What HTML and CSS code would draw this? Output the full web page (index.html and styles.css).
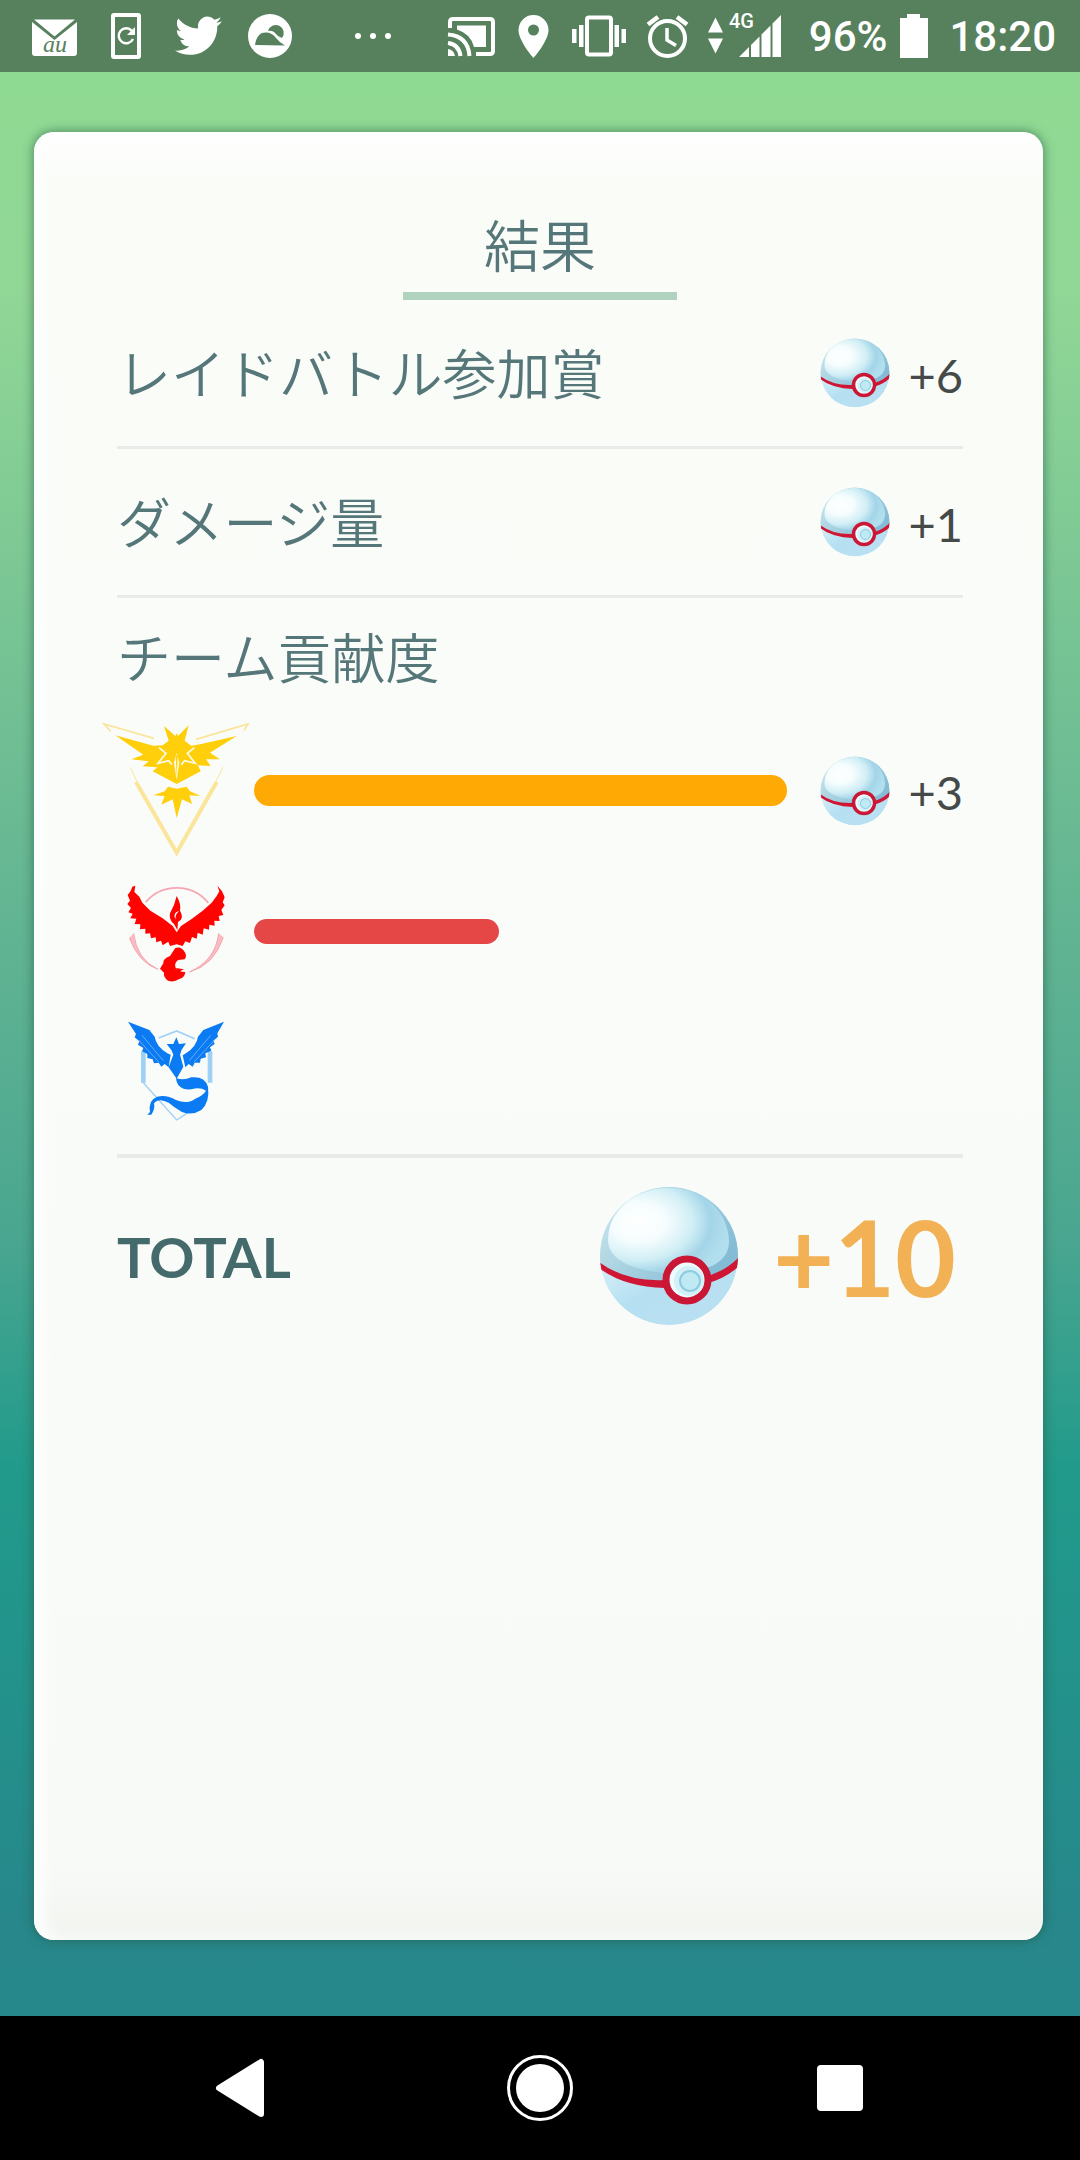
FILE: index.html
```html
<!DOCTYPE html>
<html lang="ja">
<head>
<meta charset="utf-8">
<meta name="viewport" content="width=device-width, initial-scale=1">
<title>結果</title>
<link rel="stylesheet" href="styles.css">
</head>
<body>
<svg class="defs" aria-hidden="true">
  <defs>
    <radialGradient id="shell" cx="0.25" cy="0.4" r="0.75">
      <stop offset="0" stop-color="#fefffe"/>
      <stop offset="0.3" stop-color="#f6fdfe"/>
      <stop offset="0.6" stop-color="#d0eef5"/>
      <stop offset="0.8" stop-color="#a3d5e8"/>
      <stop offset="1" stop-color="#b2dfee"/>
    </radialGradient>
    <linearGradient id="rim" x1="0" y1="0" x2="1" y2="0.6">
      <stop offset="0" stop-color="#d4edf4"/>
      <stop offset="0.35" stop-color="#b4d9e5"/>
      <stop offset="1" stop-color="#84bcd5"/>
    </linearGradient>
    <linearGradient id="base" x1="0" y1="0.2" x2="0.5" y2="1">
      <stop offset="0" stop-color="#f4fcfe"/>
      <stop offset="0.7" stop-color="#b5e0f1"/>
      <stop offset="1" stop-color="#b9e0f2"/>
    </linearGradient>
    <clipPath id="ball-clip"><circle cx="70" cy="70" r="69"/></clipPath>
    <symbol id="ball" viewBox="0 0 140 140">
      <g clip-path="url(#ball-clip)">
        <circle cx="70" cy="70" r="69" fill="url(#base)"/>
        <path d="M0 0H140V78Q116 96 68 96T0 78Z" fill="url(#rim)"/>
        <path d="M9 54C9 26 34 2 70 2C106 2 129 27 130 55C130 75 112 87 68 87C34 85 9 74 9 54Z" fill="url(#shell)"/>
        <path d="M0 76Q27 96 66 94Q116 97 140 71V80Q116 103 66 102Q25 101 0 82Z" fill="#cf1634"/>
      </g>
      <circle cx="88" cy="94" r="21" fill="#ecfbfe" stroke="#ca1735" stroke-width="7"/>
      <circle cx="90" cy="95" r="15" fill="#d4f0f7"/>
      <circle cx="91" cy="95" r="10" fill="#bfe9f3" stroke="#8dcbe0" stroke-width="2"/>
    </symbol>
  </defs>
</svg>

<header class="status">
  <div class="status-group">
    <svg class="status-icon" viewBox="24 0 70 72" width="70" height="72" fill="#fff" role="img" aria-label="メール">
      <path d="M34 19.500H75L54.500 36.500Z"/>
      <path d="M32 22L54.500 40L77 22V53a3 3 0 0 1-3 3H35a3 3 0 0 1-3-3Z"/>
      <text class="mail-mark" x="43" y="52">au</text>
    </svg>
    <svg class="status-icon" viewBox="94 0 64 72" width="64" height="72" role="img" aria-label="端末の更新">
      <rect x="113" y="15" width="26" height="42" rx="1" fill="none" stroke="#fff" stroke-width="4"/>
      <path d="M132 31A7.500 7.500 0 1 0 133 39" fill="none" stroke="#fff" stroke-width="2.500"/>
      <path d="M135 27V35H127Z" fill="#fff"/>
    </svg>
    <svg class="status-icon" viewBox="158 0 80 72" width="80" height="72" fill="#fff" role="img" aria-label="Twitter">
      <path transform="translate(175 12.200) scale(1.960)" d="M23.950 4.570a10 10 0 0 1-2.820.77 4.960 4.960 0 0 0 2.160-2.720c-.95.550-2 .95-3.130 1.180a4.920 4.920 0 0 0-8.380 4.480C7.690 8.090 4.070 6.130 1.640 3.160a4.820 4.820 0 0 0-.67 2.480c0 1.710.87 3.210 2.190 4.100a4.900 4.900 0 0 1-2.230-.62v.06a4.920 4.920 0 0 0 3.950 4.830 5 5 0 0 1-2.210.080 4.940 4.940 0 0 0 4.600 3.420A9.870 9.870 0 0 1 0 19.540a13.990 13.990 0 0 0 7.550 2.210c9.050 0 14-7.500 14-13.980 0-.21 0-.42-.02-.63a9.940 9.940 0 0 0 2.420-2.570z"/>
    </svg>
    <svg class="status-icon" viewBox="238 0 84 72" width="84" height="72" role="img" aria-label="天気">
      <circle cx="270" cy="36" r="22" fill="#fff"/>
      <g fill="#57815c">
        <path d="M268 31A8 8 0 1 1 282 38Q277 36 274 32Q271 30 268 31Z"/>
        <path d="M255 45Q257 32 266 32.500Q272 32.500 276 38Q279 42 285 45.500Z"/>
      </g>
    </svg>
    <svg class="status-icon" viewBox="322 0 84 72" width="84" height="72" fill="#fff" role="img" aria-label="その他の通知">
      <circle cx="358" cy="36" r="3"/><circle cx="373" cy="36" r="3"/><circle cx="388" cy="36" r="3"/>
    </svg>
  </div>

  <div class="status-group">
    <svg class="status-icon" viewBox="440 0 68 72" width="68" height="72" role="img" aria-label="キャスト">
      <path d="M451 28V22Q451 19 454 19H491Q494 19 494 22V51Q494 54 491 54H477" fill="none" stroke="#fff" stroke-width="4"/>
      <path d="M458 25.500H487V47H475Q472 34 458 29.500Z" fill="#fff"/>
      <path d="M449 34.500Q469 36 470.500 56M449 43Q460 44.500 461.500 56" fill="none" stroke="#fff" stroke-width="4"/>
      <path d="M449 49Q455 50 456 56H449Z" fill="#fff"/>
    </svg>
    <svg class="status-icon" viewBox="508 0 56 72" width="56" height="72" role="img" aria-label="位置情報">
      <path fill="#fff" fill-rule="evenodd" d="M534.500 15a15 15 0 0 1 15 15C549.500 41 534.500 58 534.500 58S519.500 41 519.500 30a15 15 0 0 1 15-15Zm0 9.500a5.500 5.500 0 1 0 0 11a5.500 5.500 0 0 0 0-11Z"/>
    </svg>
    <svg class="status-icon" viewBox="564 0 72 72" width="72" height="72" fill="#fff" role="img" aria-label="マナーモード">
      <rect x="588" y="17.500" width="24" height="37" rx="2" fill="none" stroke="#fff" stroke-width="4"/>
      <path d="M573 29h4.500v14H573zM580 25h4.500v22H580zM615.500 25h4.500v22h-4.500zM622.500 29h4.500v14h-4.500z"/>
    </svg>
    <svg class="status-icon" viewBox="636 0 66 72" width="66" height="72" fill="none" stroke="#fff" stroke-width="4" role="img" aria-label="アラーム">
      <circle cx="668.500" cy="38.500" r="17.500"/>
      <path d="M649 24.500L659 17M688 24.500L678 17" stroke-width="4.500"/>
      <path d="M668 28V40L677 45.500" stroke-width="3.500"/>
    </svg>
    <svg class="status-icon" viewBox="702 0 98 72" width="98" height="72" fill="#fff" role="img" aria-label="4G">
      <path d="M709 32.500L716.500 17.500L724 32.500ZM709 38.500H724L716.500 53.500Z"/>
      <path d="M740 57L750 47V57ZM752 45L760.500 36.500V57H752ZM762.500 34.500L771.500 25.500V57H762.500ZM773.500 23.500L782 15V57H773.500Z"/>
      <text class="network" x="730" y="28">4G</text>
    </svg>
    <span class="battery-level">96%</span>
    <svg class="status-icon" viewBox="890 0 50 72" width="50" height="72" fill="#fff" role="img" aria-label="電池">
      <path d="M906 14H919V18H927V58H899V18H906Z"/>
    </svg>
    <time class="clock">18:20</time>
  </div>
</header>

<main class="screen">
  <section class="card">
    <h1 class="title">結果</h1>

    <div class="row">
      <h2 class="label">レイドバトル参加賞</h2>
      <svg class="ball" aria-hidden="true"><use href="#ball"/></svg>
      <span class="amount">+6</span>
    </div>

    <div class="row">
      <h2 class="label">ダメージ量</h2>
      <svg class="ball" aria-hidden="true"><use href="#ball"/></svg>
      <span class="amount">+1</span>
    </div>

    <div class="contribution">
      <h2 class="label contribution-label">チーム貢献度</h2>
      <ul class="teams">
        <li class="team">
          <svg class="emblem" viewBox="36 60 450 423" role="img" aria-label="インスティンクト">
            <g fill="none" stroke="#fae59a">
              <path d="M192 115L42 72L62 94M318 118L474 72L462 92" stroke-width="5"/>
              <path d="M121 202L142 248M399 202L376 248" stroke-width="3"/>
              <path d="M138 246L260 458L380 246" stroke-width="12"/>
            </g>
            <g fill="#fecf0a">
              <path d="M76 106L190 137L218 136L236 122L222 78L256 108L260 100L264 108L296 76L284 122L304 137L334 132L440 108L360 158L390 178L348 178L362 198L324 196L332 214L260 252L188 214L202 202L158 199L176 184L124 178L160 164Z"/>
              <path d="M234 260L260 266L290 260L300 274L332 288L298 286L306 312L276 298L260 354L248 298L214 314L224 288L190 286L224 274Z"/>
            </g>
            <path d="M207 143L228 160L204 190L236 182L246 194M313 143L292 160L316 190L284 182L274 194" fill="none" stroke="#fffbe8" stroke-width="5"/>
            <path d="M260 158L268 188L260 240L252 188Z" fill="#fffbe8"/>
            <path d="M257 166h6l-3 66z" fill="#fecf0a"/>
          </svg>
          <div class="track"><div class="bar bar-yellow"></div></div>
          <div class="reward">
            <svg class="ball" aria-hidden="true"><use href="#ball"/></svg>
            <span class="amount">+3</span>
          </div>
        </li>
        <li class="team">
          <svg class="emblem" viewBox="36 483 450 423" role="img" aria-label="ヴァーラー">
            <g fill="none" stroke="#f6a6b0">
              <path d="M167 607A122 122 0 0 1 355 609" stroke-width="5"/>
              <path d="M131 700Q140 778 204 808Q146 788 118 714M386 700Q376 782 298 816Q372 796 400 712" stroke-width="3" fill="#f9bcc4"/>
            </g>
            <g fill="#fe0300">
              <path d="M136 557L133 576L148 590L157 608L181 632L218 655L248 678L260 697L273 678L306 656L338 632L365 608L380 588L388 574L382 557L396 574L404 592L398 607L404 616L394 630L400 645L386 648L389 663L373 662L374 677L358 674L357 689L341 685L338 704L323 698L320 716L306 711L300 729L286 724L278 738L260 733L240 738L235 725L218 736L213 722L199 727L197 712L183 715L180 700L166 701L166 686L150 688L151 673L134 672L139 656L121 655L128 641L115 637L123 624L112 612L120 602L113 585L122 573L127 560Z"/>
              <path d="M260 588Q274 612 270 632Q280 648 272 660L264 666L262 690L252 672Q236 660 240 640Q254 616 260 588Z"/>
              <path d="M256 744Q274 738 284 756Q292 768 284 778L264 780Q250 792 258 806Q266 814 286 816Q284 834 266 838Q252 848 234 842Q220 832 222 818L210 806L220 790Q218 776 240 768Q248 756 256 744Z"/>
            </g>
            <path d="M268 632Q244 640 258 660Q252 646 268 632ZM266 790Q250 806 270 812L278 804Q262 808 266 790Z" fill="#fff"/>
            <path d="M258 804L264 816L282 808Z" fill="#fe0300"/>
          </svg>
          <div class="track"><div class="bar bar-red"></div></div>
        </li>
        <li class="team">
          <svg class="emblem" viewBox="36 906 450 423" role="img" aria-label="ミスティック">
            <g fill="none" stroke="#9fd0f5">
              <path d="M206 1014L260 993L314 1016" stroke-width="5"/>
              <path d="M160 1054V1148M360 1054V1148" stroke-width="14"/>
              <path d="M158 1146L260 1260L300 1234" stroke-width="4"/>
            </g>
            <g fill="#0a7bf2">
              <path d="M114 965L178 990L194 1010Q198 1038 232 1060L242 1064L236 1102L224 1092L214 1100L206 1088L192 1090L188 1078L172 1074L172 1062L156 1054L160 1044L144 1034L148 1024L134 1012L138 1002Z"/>
              <path d="M402 965L340 990L324 1010Q320 1038 288 1060L278 1066L286 1102L296 1092L308 1100L314 1088L330 1088L332 1076L348 1072L346 1060L364 1052L360 1042L374 1032L370 1022L384 1010L382 1000Z"/>
              <path d="M259 1012L267 1032L288 1030L275 1049L270 1064L280 1100L260 1136L236 1102L250 1064L244 1050L230 1032L250 1032Z"/>
              <path d="M258 1134Q280 1142 304 1132Q344 1128 354 1160Q360 1206 334 1230Q306 1248 276 1236Q252 1222 236 1208Q206 1192 192 1210Q196 1226 184 1244L172 1244L180 1236Q174 1200 202 1190Q230 1184 258 1200Q292 1214 316 1196Q340 1186 348 1172Q330 1160 304 1168Q262 1172 258 1134Z"/>
            </g>
            <path d="M156 1006L220 1082M146 1020L206 1086M362 1006L298 1082M374 1020L312 1086" fill="none" stroke="#8fc4fa" stroke-width="2"/>
          </svg>
          <div class="track"></div>
        </li>
      </ul>
    </div>

    <div class="total">
      <h2 class="total-label">TOTAL</h2>
      <svg class="ball ball-large" aria-hidden="true"><use href="#ball"/></svg>
      <strong class="total-amount">+10</strong>
    </div>
  </section>
</main>

<nav class="navbar">
  <button class="nav-button" type="button" aria-label="戻る">
    <svg width="72" height="72" viewBox="0 0 72 72"><path d="M57 10V62L15 36Z" fill="#fff" stroke="#fff" stroke-width="6" stroke-linejoin="round"/></svg>
  </button>
  <button class="nav-button" type="button" aria-label="ホーム">
    <svg width="72" height="72" viewBox="0 0 72 72"><circle cx="36" cy="36" r="31.500" fill="none" stroke="#fff" stroke-width="3"/><circle cx="36" cy="36" r="24" fill="#fff"/></svg>
  </button>
  <button class="nav-button" type="button" aria-label="履歴">
    <svg width="72" height="72" viewBox="0 0 72 72"><rect x="13" y="13" width="46" height="46" rx="4" fill="#fff"/></svg>
  </button>
</nav>
</body>
</html>
```

FILE: styles.css
```css
* {
  box-sizing: border-box;
}

body {
  display: flex;
  flex-direction: column;
  min-height: 100vh;
  margin: 0;
  background: #000;
  font-family: Lato, "Noto Sans CJK JP", sans-serif;
  color: #456a6c;
}

h1,
h2 {
  margin: 0;
  color: #567779;
  font-family: "Noto Sans CJK JP DemiLight", "Noto Sans CJK JP", sans-serif;
  font-weight: 350;
}

.defs {
  position: absolute;
  width: 0;
  height: 0;
}

/* Status bar */

.status {
  display: flex;
  justify-content: space-between;
  height: 72px;
  padding: 0 24px;
  background: #57815c;
  color: #fff;
  font-family: Roboto, sans-serif;
  font-size: 42px;
  font-weight: 500;
  line-height: 74px;
}

.status-group {
  display: flex;
}

.status-icon {
  flex: none;
}

.mail-mark {
  fill: #57815c;
  font: italic 400 24px "Liberation Serif", serif;
}

.network {
  font: 500 20px Roboto, sans-serif;
}

.battery-level {
  padding: 0 4px 0 10px;
}

.clock {
  padding-left: 8px;
}

/* Result card */

.screen {
  display: flex;
  flex: 1;
  padding: 60px 37px 76px 34px;
  background: linear-gradient(#8fda93 0%, #91d796 11%, #66b793 41%, #4aa690 60%, #219a8b 72%, #23928b 83%, #27878b 95%, #27888c 100%);
}

.card {
  flex: 1;
  padding: 76px 80px 0 83px;
  border-radius: 20px;
  background: linear-gradient(#fefffe 0, #fafcf8 50px, #fafcf9 40%, #f8faf7 96%, #f2f4f0 100%);
  box-shadow: 0 0 10px 2px rgba(40, 90, 70, 0.5), inset 10px 0 14px #fdfffe;
}

.title {
  width: 274px;
  margin: 0 auto;
  padding-bottom: 14px;
  border-bottom: 8px solid #b2d2c0;
  font-size: 56px;
  line-height: 70px;
  text-align: center;
}

.row {
  display: flex;
  align-items: center;
  height: 149px;
  border-bottom: 3px solid #e8ebe8;
}

.label {
  flex: 1;
  padding-bottom: 3px;
  font-size: 54px;
  line-height: 80px;
}

.ball {
  display: block;
  flex: none;
  width: 70px;
  height: 70px;
}

.amount {
  width: 73px;
  padding-top: 3px;
  color: #454a49;
  font-size: 47px;
  line-height: 56px;
  text-align: right;
}

.contribution {
  padding-bottom: 11px;
  border-bottom: 4px solid #e8ebe8;
}

.contribution-label {
  padding-bottom: 6px;
  line-height: 116px;
}

.teams {
  margin: 0 0 0 -15px;
  padding: 0;
  list-style: none;
}

.team {
  display: grid;
  grid-template-columns: 152px 1fr 176px;
  align-items: center;
  height: 141px;
}

.emblem {
  display: block;
  width: 150px;
  height: 141px;
}

.bar {
  border-radius: 16px;
}

.bar-yellow {
  height: 31px;
  background: #ffa904;
}

.bar-red {
  width: 46%;
  height: 25px;
  background: #e54747;
}

.reward {
  display: flex;
  align-items: center;
  justify-content: flex-end;
}

.total {
  display: flex;
  align-items: center;
  height: 196px;
}

.total-label {
  flex: 1;
  padding-top: 2px;
  color: #456a6c;
  font-family: Lato, sans-serif;
  font-size: 56px;
  font-weight: 700;
  line-height: 64px;
}

.ball-large {
  width: 140px;
  height: 140px;
}

.total-amount {
  padding: 0 7px 0 34px;
  color: #f2b155;
  font-size: 105px;
  line-height: 130px;
}

/* Navigation bar */

.navbar {
  display: flex;
  height: 144px;
  padding: 0 90px;
  background: #000;
}

.nav-button {
  display: flex;
  flex: 1;
  align-items: center;
  justify-content: center;
  padding: 0;
  border: 0;
  background: none;
}
```
